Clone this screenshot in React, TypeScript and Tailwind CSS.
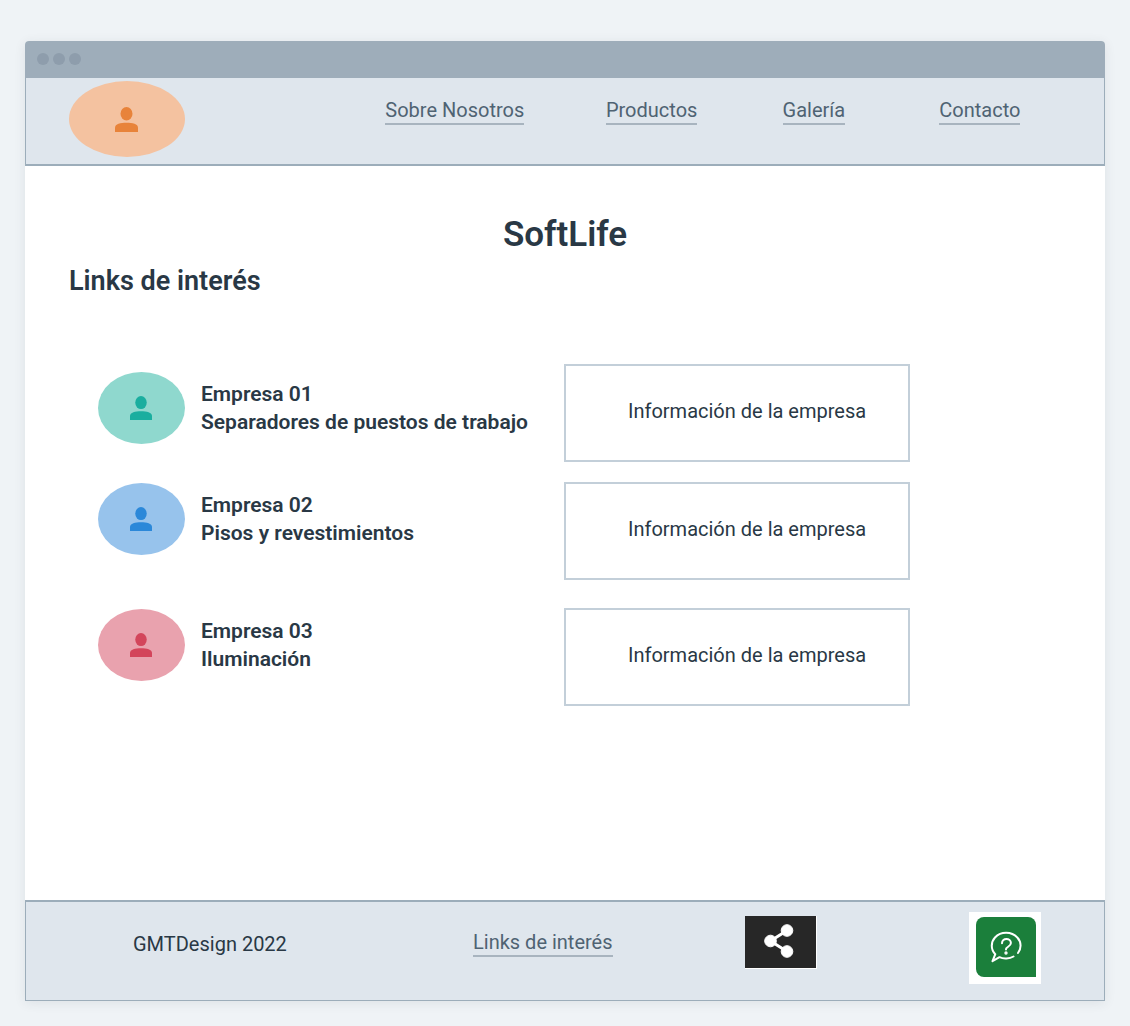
type Tone = { disc: string; figure: string };

const links = ["Sobre Nosotros", "Productos", "Galería", "Contacto"];

const companies = [
  { name: "Empresa 01", detail: "Separadores de puestos de trabajo", row: "mt-[66px]", person: "pt-2", tone: { disc: "bg-[#8fd8ce]", figure: "text-[#1aae9f]" } },
  { name: "Empresa 02", detail: "Pisos y revestimientos", row: "mt-5", person: "pt-px", tone: { disc: "bg-[#97c3ec]", figure: "text-[#2b88d9]" } },
  { name: "Empresa 03", detail: "Iluminación", row: "mt-7", person: "pt-px", tone: { disc: "bg-[#e9a2ae]", figure: "text-[#d3455b]" } },
];

function Avatar({ tone, size, icon }: { tone: Tone; size: string; icon: string }) {
  return (
    <span className={`flex shrink-0 items-center justify-center rounded-[50%] pr-0.5 ${tone.disc} ${size}`}>
      <svg aria-hidden="true" viewBox="0 0 23 25" preserveAspectRatio="none" className={`${icon} ${tone.figure}`} fill="currentColor">
        <ellipse cx="11.5" cy="6.8" rx="6" ry="6.8" />
        <path d="M0 25v-4.2C0 17 5.5 15.8 11.5 15.8S23 17 23 20.8V25Z" />
      </svg>
    </span>
  );
}

function TextLink({ children }: { children: string }) {
  return (
    <a href="#" className="inline-block border-b-2 border-[#a8b4bf] leading-[26px] whitespace-nowrap text-[#4f6373]">
      {children}
    </a>
  );
}

export default function App() {
  return (
    <div className="min-h-screen bg-[#eff3f6] px-[25px] pt-[41px] pb-[25px] font-[Roboto,sans-serif] text-[20px] leading-7 text-[#293845]">
      <div className="flex min-h-[960px] flex-col rounded-t bg-white shadow-[0_2px_12px_rgba(41,56,69,0.09)]">
        <div className="flex h-[37px] shrink-0 items-center gap-1 rounded-t bg-[#9eadba] px-3 pb-0.5">
          <span className="size-3 rounded-full bg-[#8e9dac]" />
          <span className="size-3 rounded-full bg-[#8e9dac]" />
          <span className="size-3 rounded-full bg-[#8e9dac]" />
        </div>

        <header className="grid h-[88px] shrink-0 grid-cols-[1fr_2fr] border border-t-0 border-b-2 border-[#9cadba] bg-[#dfe6ed]">
          <div className="pt-[3px] pl-[43px]">
            <Avatar tone={{ disc: "bg-[#f4c2a0]", figure: "text-[#e8833a]" }} size="h-[76px] w-[116px]" icon="h-[25px] w-[23px]" />
          </div>
          <nav className="grid grid-cols-[221fr_177fr_157fr_165fr] items-start pt-[19px]">
            {links.map((label) => (
              <div key={label} className="flex">
                <TextLink>{label}</TextLink>
              </div>
            ))}
          </nav>
        </header>

        <main className="flex-1 px-11 pt-[49px]">
          <h1 className="text-center text-[35px] leading-10 font-semibold">SoftLife</h1>
          <h2 className="mt-2.5 text-[27px] leading-8 font-semibold">Links de interés</h2>
          <ul className="pt-px pb-6 pl-[29px]">
            {companies.map((c) => (
              <li key={c.name} className={`grid grid-cols-[466fr_346fr_151fr] items-start ${c.row}`}>
                <div className={`flex items-center gap-4 ${c.person}`}>
                  <Avatar tone={c.tone} size="h-[72px] w-[87px]" icon="h-6 w-[22px]" />
                  <p className="text-[21px] font-semibold">
                    {c.name}
                    <br />
                    {c.detail}
                  </p>
                </div>
                <p className="flex h-[98px] items-center border-2 border-[#c3cfd9] pb-1 pl-[62px] whitespace-nowrap">
                  Información de la empresa
                </p>
              </li>
            ))}
          </ul>
        </main>

        <footer className="grid h-[101px] shrink-0 grid-cols-[447fr_272fr_224fr_135fr] items-start border border-t-2 border-[#9cadba] bg-[#dfe6ed]">
          <p className="pt-7 pl-[107px]">GMTDesign 2022</p>
          <div className="flex pt-[27px]">
            <TextLink>Links de interés</TextLink>
          </div>
          <div className="pt-3.5">
            <button type="button" aria-label="Compartir" className="block h-[53px] w-[72px] border-r border-b border-white bg-[#272727]">
              <svg viewBox="0 0 71 52" className="h-[52px] w-[71px]" fill="white" stroke="white">
                <path d="M42 14.500 25.500 25 42 35.500" fill="none" strokeWidth="3" />
                <circle cx="42" cy="14.500" r="5.800" />
                <circle cx="25.500" cy="25" r="5.800" />
                <circle cx="42" cy="35.500" r="5.800" />
              </svg>
            </button>
          </div>
          <div className="pt-2.5">
            <button type="button" aria-label="Ayuda" className="block size-[72px] bg-white pt-[5px] pr-[5px] pb-[7px] pl-[7px]">
              <svg viewBox="0 0 60 60" className="size-[60px] rounded-lg rounded-br-none bg-[#1b7f3b]" fill="none" stroke="white" strokeWidth="2" strokeLinecap="round" strokeLinejoin="round">
                <path d="M37.500 39.500C33.500 41.800 27.500 42.200 23.500 40.200L16.500 44.200 19.300 37.200C14.500 32.500 14.800 25 19 20.500c6-6.500 16.500-6.200 22.300 0C45.500 25 45.500 31.500 42 36" />
                <path d="M26 26.300c0-5.900 8.900-5.600 8.900-.2 0 3.500-4.800 3.600-4.900 6v.4" />
                <circle cx="30" cy="36" r=".7" />
              </svg>
            </button>
          </div>
        </footer>
      </div>
    </div>
  );
}
